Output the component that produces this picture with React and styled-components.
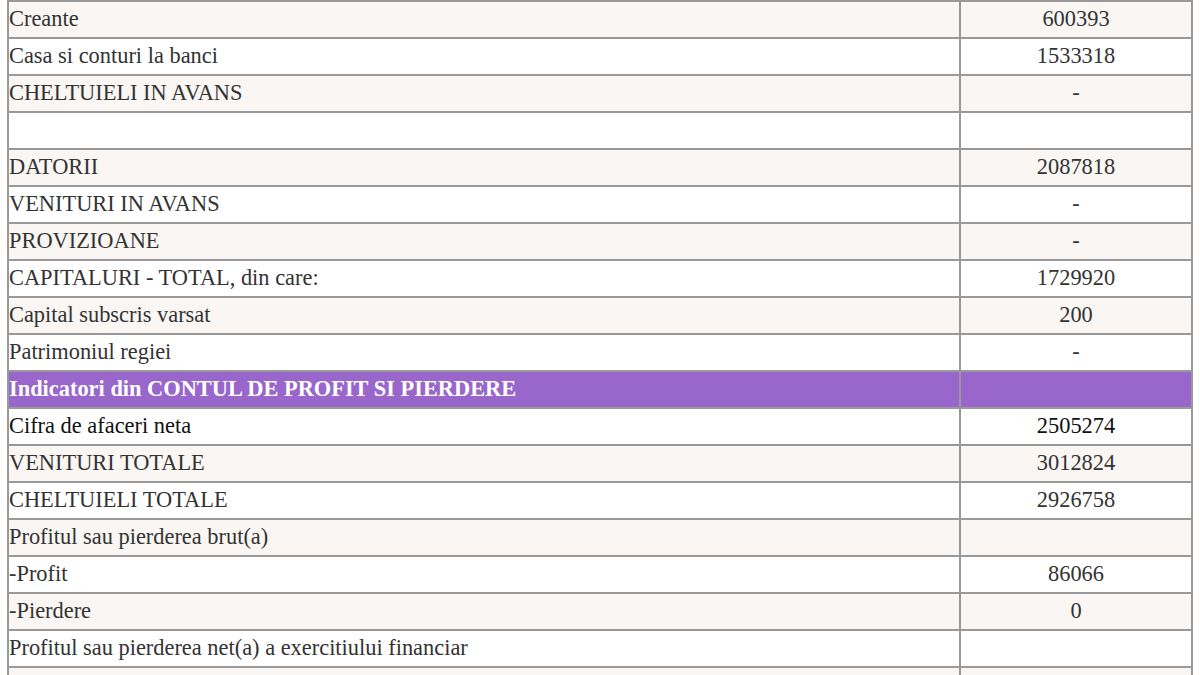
import React from 'react';
import styled, { createGlobalStyle } from 'styled-components';

const GlobalStyle = createGlobalStyle`
  body {
    margin: 0 7px 0 7px;
    background: #fff;
    font-family: "Liberation Serif", "Times New Roman", serif;
  }
`;

const Table = styled.table`
  width: 100%;
  border-collapse: collapse;
  font-size: 22.4px;
  color: #333;
`;

const Row = styled.tr`
  height: 37px;
  background: ${(p) => (p.$header ? '#9966cc' : p.$shade ? '#f9f6f3' : '#fff')};
  color: ${(p) => (p.$header ? '#fff' : p.$strong ? '#111' : '#333')};
  font-weight: ${(p) => (p.$header ? 'bold' : 'normal')};
`;

const Label = styled.td`
  border: 2px solid #999;
  padding: 0 0 1px;
  vertical-align: middle;
  white-space: nowrap;
`;

const Value = styled.td`
  border: 2px solid #999;
  width: 230px;
  padding: 0 0 1px;
  text-align: center;
  vertical-align: middle;
`;

const rows = [
  ['Creante', '600393'],
  ['Casa si conturi la banci', '1533318'],
  ['CHELTUIELI IN AVANS', '-'],
  ['', ''],
  ['DATORII', '2087818'],
  ['VENITURI IN AVANS', '-'],
  ['PROVIZIOANE', '-'],
  ['CAPITALURI - TOTAL, din care:', '1729920'],
  ['Capital subscris varsat', '200'],
  ['Patrimoniul regiei', '-'],
  ['Indicatori din CONTUL DE PROFIT SI PIERDERE', '', 'header'],
  ['Cifra de afaceri neta', '2505274', 'strong'],
  ['VENITURI TOTALE', '3012824'],
  ['CHELTUIELI TOTALE', '2926758'],
  ['Profitul sau pierderea brut(a)', ''],
  ['-Profit', '86066'],
  ['-Pierdere', '0'],
  ['Profitul sau pierderea net(a) a exercitiului financiar', ''],
  ['', ''],
];

const App = () => {
  return (
    <>
      <GlobalStyle />
      <Table>
        <tbody>
          {rows.map(([label, value, kind], i) => (
            <Row
              key={i}
              $shade={i % 2 === 0}
              $header={kind === 'header'}
              $strong={kind === 'strong'}
            >
              <Label>{label}</Label>
              <Value>{value}</Value>
            </Row>
          ))}
        </tbody>
      </Table>
    </>
  );
};

export default App;
